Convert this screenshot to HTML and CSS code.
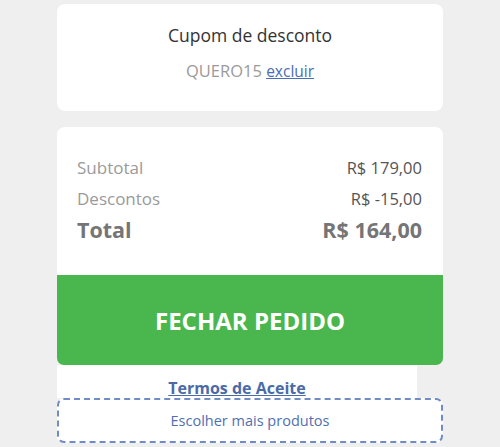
FILE: index.html
```html
<!DOCTYPE html>
<html lang="pt-BR">
<head>
    <meta charset="UTF-8">
    <meta name="viewport" content="width=device-width, initial-scale=1.0">
    <title>Carrinho - Resumo do Pedido</title>
    <link rel="stylesheet" href="styles.css">
</head>
<body>
    <div class="cart">
        <div class="card coupon">
            <h2>Cupom de desconto</h2>
            <p class="coupon-code">QUERO15 <a href="#">excluir</a></p>
        </div>
        <div class="card summary">
            <div class="row">
                <span>Subtotal</span>
                <span class="value">R$ 179,00</span>
            </div>
            <div class="row">
                <span>Descontos</span>
                <span class="value">R$ -15,00</span>
            </div>
            <div class="row total">
                <span>Total</span>
                <span class="value">R$ 164,00</span>
            </div>
        </div>
        <button class="checkout">FECHAR PEDIDO</button>
        <div class="terms">
            <a href="#">Termos de Aceite</a>
        </div>
        <a href="#" class="more">Escolher mais produtos</a>
    </div>
</body>
</html>
```

FILE: styles.css
```css
body, html {
    margin: 0;
    padding: 0;
    font-family: "Open Sans", Arial, sans-serif;
    background-color: #efefef;
}
.cart {
    width: 386px;
    margin: 0 auto;
    padding-top: 4px;
}
.card {
    background-color: #ffffff;
    border-radius: 8px;
}
.coupon {
    height: 107px;
    text-align: center;
    padding-top: 20px;
    box-sizing: border-box;
}
.coupon h2 {
    margin: 0;
    font-size: 17.5px;
    font-weight: normal;
    color: #333333;
    line-height: 22px;
}
.coupon-code {
    margin: 14px 0 0;
    font-size: 16.5px;
    color: #9a9a9a;
    line-height: 22px;
}
.coupon-code a {
    font-size: 15.5px;
    color: #4a6db5;
}
.summary {
    margin-top: 16px;
    padding: 25px 21px 30px 20px;
    border-radius: 8px 8px 0 0;
}
.row {
    display: flex;
    justify-content: space-between;
    align-items: center;
    height: 31px;
    font-size: 17px;
    color: #9a9a9a;
}
.row .value {
    font-size: 16.5px;
    color: #555555;
}
.row.total {
    font-size: 21.5px;
    font-weight: bold;
    color: #757575;
}
.row.total .value {
    font-size: 21.5px;
    color: #757575;
}
.checkout {
    display: block;
    width: 100%;
    height: 90px;
    border: none;
    border-radius: 0 0 7px 7px;
    background-color: #4ab64e;
    color: #ffffff;
    font-family: inherit;
    font-size: 24px;
    font-weight: bold;
    cursor: pointer;
}
.terms {
    width: 360px;
    height: 33px;
    background-color: #ffffff;
    text-align: center;
    padding-top: 12px;
    box-sizing: border-box;
}
.terms a {
    font-size: 16px;
    font-weight: bold;
    color: #4a6aa8;
    line-height: 22px;
}
.more {
    display: block;
    height: 45px;
    box-sizing: border-box;
    border: 2px dashed #6f8cc4;
    border-radius: 7px;
    background-color: #ffffff;
    text-align: center;
    line-height: 41px;
    font-size: 14.5px;
    color: #4f70b0;
    text-decoration: none;
}
```
